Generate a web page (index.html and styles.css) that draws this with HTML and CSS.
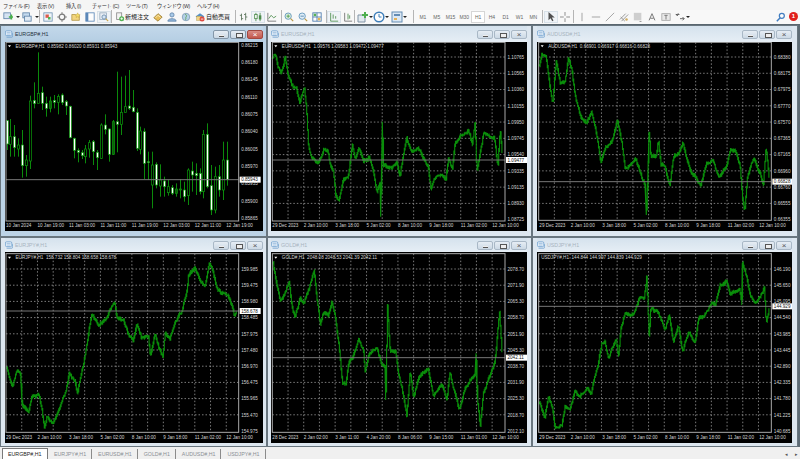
FILE: index.html
```html
<!DOCTYPE html>
<html lang="ja">
  <head>
    <meta charset="UTF-8" />
    <title>MetaTrader 4</title>
    <link rel="stylesheet" href="styles.css">
  </head>
  <body>
    <!-- icons used by the toolbar -->
    <svg class="sprites" width="0" height="0">
      <symbol id="i-new" viewBox="0 0 12 12"><rect x="1" y="1" width="8" height="7" fill="#cfe0f2" stroke="#47719c"/><path d="M7 5h2V3h2v2h1v2h-1v2H9V7H7z" fill="#2aa52a"/></symbol>
      <symbol id="i-prof" viewBox="0 0 12 12"><rect x="1" y="1" width="8" height="6" fill="#bcd6ee" stroke="#47719c"/><rect x="3" y="5" width="8" height="6" fill="#dbe8f5" stroke="#47719c"/></symbol>
      <symbol id="i-mkt" viewBox="0 0 12 12"><rect x="1" y="1" width="10" height="10" fill="#eef4fa" stroke="#5b83aa"/><rect x="3" y="3" width="4" height="4" fill="#d9402f"/><rect x="6" y="6" width="3" height="3" fill="#37a637"/></symbol>
      <symbol id="i-nav" viewBox="0 0 12 12"><circle cx="6" cy="6" r="3.4" fill="none" stroke="#666" stroke-width="1.6"/><path d="M6 0v3M6 9v3M0 6h3M9 6h3" stroke="#666"/></symbol>
      <symbol id="i-fold" viewBox="0 0 12 12"><path d="M1 3h4l1 1h4v6H1z" fill="#f1cf6a" stroke="#a98a2c"/><path d="M8 1l1 2 2 .3-1.5 1.4.4 2-1.900-1-1.900 1 .4-2L5 3.300 7 3z" fill="#f6d94c" stroke="#b08a1d" stroke-width=".5"/></symbol>
      <symbol id="i-win" viewBox="0 0 12 12"><rect x="1" y="1" width="10" height="10" fill="#fff" stroke="#3f74ad"/><rect x="1" y="1" width="3" height="10" fill="#3f74ad"/></symbol>
      <symbol id="i-test" viewBox="0 0 12 12"><rect x="1" y="1" width="8" height="8" fill="#e6edf4" stroke="#8aa0b6"/><circle cx="6" cy="6" r="2.500" fill="#cfe3f6" stroke="#51769b"/><path d="M8 8l3 3" stroke="#c49a2f" stroke-width="1.500"/></symbol>
      <symbol id="i-order" viewBox="0 0 12 12"><rect x="2" y="1" width="6" height="8" fill="#f3f3f3" stroke="#777"/><circle cx="8" cy="8" r="3" fill="#38a838"/><path d="M6.500 8h3M8 6.500v3" stroke="#fff"/></symbol>
      <symbol id="i-book" viewBox="0 0 12 12"><path d="M1 7l5-5 5 4-5 5z" fill="#e3b23c" stroke="#8c6a18"/><path d="M3 7l3-3 3 2.500" fill="none" stroke="#fff2c0"/></symbol>
      <symbol id="i-user" viewBox="0 0 12 12"><circle cx="6" cy="3.500" r="2.500" fill="#9cc2e6" stroke="#48729d"/><path d="M1 11c0-4 10-4 10 0z" fill="#7fabd6" stroke="#48729d"/></symbol>
      <symbol id="i-globe" viewBox="0 0 12 12"><circle cx="6" cy="6" r="4.500" fill="#a9cbe6" stroke="#6f8ea9"/><path d="M5 3c2 0 2 2 1 3s1 3-1 3" fill="none" stroke="#4f9b4f" stroke-width="1.200"/></symbol>
      <symbol id="i-auto" viewBox="0 0 12 12"><path d="M1 5l5-3.500L11 5v1H1z" fill="#3d7fbe"/><rect x="2" y="5" width="6" height="5" fill="#f0d070" stroke="#9a7a20" stroke-width=".5"/><circle cx="8.500" cy="8.500" r="3" fill="#d92c20"/><path d="M7 8.500h3" stroke="#fff"/></symbol>
      <symbol id="i-bars" viewBox="0 0 12 12"><path d="M3 2v8M3 4H1M3 8h2M8 1v9M8 3H6M8 6h2" stroke="#3c5a3c" fill="none"/></symbol>
      <symbol id="i-candle" viewBox="0 0 12 12"><path d="M3.500 1v10M8.500 1v10" stroke="#2d7a2d"/><rect x="2" y="3" width="3" height="5" fill="#fff" stroke="#2d7a2d"/><rect x="7" y="4" width="3" height="5" fill="#2d7a2d"/></symbol>
      <symbol id="i-line" viewBox="0 0 12 12"><path d="M1 1v10h10" stroke="#555" fill="none"/><path d="M2 8l3-4 3 3 3-2" stroke="#2d7a2d" fill="none"/></symbol>
      <symbol id="i-zin" viewBox="0 0 12 12"><circle cx="5" cy="5" r="3.800" fill="#d9ecd9" stroke="#3f7fae"/><path d="M3 5h4M5 3v4" stroke="#2a8a2a"/><path d="M8 8l3 3" stroke="#b08a2a" stroke-width="1.500"/></symbol>
      <symbol id="i-zout" viewBox="0 0 12 12"><circle cx="5" cy="5" r="3.800" fill="#dcecf7" stroke="#3f7fae"/><path d="M3 5h4" stroke="#2a6a9a"/><path d="M8 8l3 3" stroke="#b08a2a" stroke-width="1.500"/></symbol>
      <symbol id="i-tile" viewBox="0 0 12 12"><rect x="1" y="1" width="10" height="10" fill="#fff" stroke="#2a62a0"/><path d="M1 6h10M6 1v10" stroke="#2a62a0"/><rect x="2" y="2" width="3" height="3" fill="#3aa53a"/><rect x="7" y="7" width="3" height="3" fill="#e0a83a"/></symbol>
      <symbol id="i-shift" viewBox="0 0 12 12"><path d="M2 1v10h9M5 3v5M8 5v3" stroke="#2d7a2d" fill="none"/></symbol>
      <symbol id="i-auto2" viewBox="0 0 12 12"><path d="M2 1v10h9" stroke="#555" fill="none"/><path d="M6 2v7M8 4v4" stroke="#2d7a2d"/></symbol>
      <symbol id="i-ind" viewBox="0 0 12 12"><path d="M1 4h6l1 1v6H1z" fill="#dfe8ef" stroke="#6d8398"/><path d="M7 1h2v2h2v2H9v2H7V5H5V3h2z" fill="#32a332"/></symbol>
      <symbol id="i-clock" viewBox="0 0 12 12"><circle cx="6" cy="6" r="4.800" fill="#fff" stroke="#1f6ab0" stroke-width="1.500"/><path d="M6 3v3h2.500" stroke="#1f6ab0" fill="none"/></symbol>
      <symbol id="i-tpl" viewBox="0 0 12 12"><rect x="1" y="1" width="10" height="10" fill="#d7e6f4" stroke="#4b7aa8"/><rect x="3" y="3" width="6" height="2" fill="#4b7aa8"/><rect x="3" y="7" width="3" height="2" fill="#e4a53a"/></symbol>
      <symbol id="i-cursor" viewBox="0 0 12 12"><path d="M3 0v10l2.500-2.500L7.500 11l1.500-.8-2-3.500h3.500z" fill="#333"/></symbol>
      <symbol id="i-cross" viewBox="0 0 12 12"><path d="M6 0v4.500M6 7.500V12M0 6h4.500M7.500 6H12" stroke="#666"/></symbol>
      <symbol id="i-vline" viewBox="0 0 12 12"><path d="M6 1v10" stroke="#888"/></symbol>
      <symbol id="i-hline" viewBox="0 0 12 12"><path d="M1 6h10" stroke="#888"/></symbol>
      <symbol id="i-trend" viewBox="0 0 12 12"><path d="M1 11L11 1" stroke="#888"/></symbol>
      <symbol id="i-chan" viewBox="0 0 12 12"><path d="M1 9l7-7M3 11l8-8M2 6l5 5" stroke="#777" fill="none"/><circle cx="9" cy="9" r="1.500" fill="#c9a04a"/></symbol>
      <symbol id="i-fib" viewBox="0 0 12 12"><rect x="1" y="1" width="9" height="9" fill="#c9c9c9"/><path d="M7 11h4l-2 1z" fill="#555"/></symbol>
      <symbol id="i-text" viewBox="0 0 12 12"><path d="M2.500 10L6 2l3.500 8M4 7.500h4" stroke="#666" stroke-width="1.200" fill="none"/></symbol>
      <symbol id="i-label" viewBox="0 0 12 12"><rect x="1" y="2" width="10" height="8" fill="#e6e6e6" stroke="#999"/><path d="M4 4h4M6 4v5" stroke="#555"/></symbol>
      <symbol id="i-arrows" viewBox="0 0 12 12"><path d="M1 3h4l-1.500-1.500M1 3l2.500 1.500M6 8h5M9 6l2 2-2 2" stroke="#333" fill="none"/></symbol>
      <symbol id="i-find" viewBox="0 0 12 12"><circle cx="7" cy="4.500" r="3" fill="#fff" stroke="#2369b8" stroke-width="1.500"/><path d="M5 7l-4 4" stroke="#2369b8" stroke-width="1.800"/></symbol>
      <symbol id="i-winbar" viewBox="0 0 10 10"><rect x=".5" y="1" width="8" height="6" rx="1.500" fill="#eaf3fb" stroke="#6f9fce"/><path d="M2 9h6.500c1 0 1-1 1-2V4" fill="none" stroke="#6f9fce"/><path d="M2 3h5M2 5h5" stroke="#6f9fce" stroke-width=".7"/></symbol>
    </svg>

    <nav class="menu">
      <span>ファイル (F)</span>
      <span>表示 (V)</span>
      <span>挿入 (I)</span>
      <span>チャート (C)</span>
      <span>ツール (T)</span>
      <span>ウィンドウ (W)</span>
      <span>ヘルプ (H)</span>
    </nav>

    <div class="toolbar">
      <div class="tool-group g-file">
        <svg class="tool"><use href="#i-new" /></svg><i class="drop"></i>
        <svg class="tool"><use href="#i-prof" /></svg><i class="drop"></i>
      </div>
      <div class="tool-group g-view">
        <svg class="tool"><use href="#i-mkt" /></svg>
        <svg class="tool"><use href="#i-nav" /></svg>
        <svg class="tool"><use href="#i-fold" /></svg>
        <svg class="tool"><use href="#i-win" /></svg>
        <svg class="tool pressed"><use href="#i-test" /></svg>
      </div>
      <div class="tool-group g-trade">
        <svg class="tool"><use href="#i-order" /></svg>
        <span class="tool-label order">新規注文</span>
        <svg class="tool"><use href="#i-book" /></svg>
        <svg class="tool"><use href="#i-user" /></svg>
        <svg class="tool"><use href="#i-globe" /></svg>
        <svg class="tool"><use href="#i-auto" /></svg>
        <span class="tool-label">自動売買</span>
      </div>
      <div class="tool-group g-type">
        <svg class="tool"><use href="#i-bars" /></svg>
        <svg class="tool pressed"><use href="#i-candle" /></svg>
        <svg class="tool"><use href="#i-line" /></svg>
      </div>
      <div class="tool-group g-zoom">
        <svg class="tool"><use href="#i-zin" /></svg>
        <svg class="tool"><use href="#i-zout" /></svg>
        <svg class="tool"><use href="#i-tile" /></svg>
      </div>
      <div class="tool-group g-shift">
        <svg class="tool pressed"><use href="#i-shift" /></svg>
        <svg class="tool"><use href="#i-auto2" /></svg>
      </div>
      <div class="tool-group g-ind">
        <svg class="tool"><use href="#i-ind" /></svg><i class="drop"></i>
        <svg class="tool"><use href="#i-clock" /></svg><i class="drop"></i>
        <svg class="tool"><use href="#i-tpl" /></svg><i class="drop"></i>
      </div>
      <div class="tool-group periods">
        <span>M1</span><span>M5</span><span>M15</span><span>M30</span>
        <span class="on">H1</span><span>H4</span><span>D1</span><span>W1</span><span>MN</span>
      </div>
      <div class="tool-group g-cursor">
        <svg class="tool pressed"><use href="#i-cursor" /></svg>
        <svg class="tool"><use href="#i-cross" /></svg>
      </div>
      <div class="tool-group g-draw">
        <svg class="tool"><use href="#i-vline" /></svg>
        <svg class="tool"><use href="#i-hline" /></svg>
        <svg class="tool"><use href="#i-trend" /></svg>
        <svg class="tool"><use href="#i-chan" /></svg>
        <svg class="tool"><use href="#i-fib" /></svg>
        <svg class="tool"><use href="#i-text" /></svg>
        <svg class="tool"><use href="#i-label" /></svg>
        <svg class="tool"><use href="#i-arrows" /></svg><i class="drop"></i>
      </div>
      <div class="toolbar-end">
        <svg class="tool"><use href="#i-find" /></svg>
        <span class="alert">1</span>
      </div>
    </div>

    <main class="workspace">
      <section class="window col-1 active">
        <header class="title"><svg class="win-icon"><use href="#i-winbar" /></svg><span>EURGBP#,H1</span><div class="win-btns"><b class="min"></b><b class="max"></b><b class="close">×</b></div></header>
        <svg class="chart" id="eurgbp"></svg>
      </section>
      <section class="window col-2">
        <header class="title"><svg class="win-icon"><use href="#i-winbar" /></svg><span>EURUSD#,H1</span><div class="win-btns"><b class="min"></b><b class="max"></b><b class="close">×</b></div></header>
        <svg class="chart" id="eurusd"></svg>
      </section>
      <section class="window col-3">
        <header class="title"><svg class="win-icon"><use href="#i-winbar" /></svg><span>AUDUSD#,H1</span><div class="win-btns"><b class="min"></b><b class="max"></b><b class="close">×</b></div></header>
        <svg class="chart" id="audusd"></svg>
      </section>
      <section class="window col-1 low">
        <header class="title"><svg class="win-icon"><use href="#i-winbar" /></svg><span>EURJPY#,H1</span><div class="win-btns"><b class="min"></b><b class="max"></b><b class="close">×</b></div></header>
        <svg class="chart" id="eurjpy"></svg>
      </section>
      <section class="window col-2 low">
        <header class="title"><svg class="win-icon"><use href="#i-winbar" /></svg><span>GOLD#,H1</span><div class="win-btns"><b class="min"></b><b class="max"></b><b class="close">×</b></div></header>
        <svg class="chart" id="gold"></svg>
      </section>
      <section class="window col-3 low">
        <header class="title"><svg class="win-icon"><use href="#i-winbar" /></svg><span>USDJPY#,H1</span><div class="win-btns"><b class="min"></b><b class="max"></b><b class="close">×</b></div></header>
        <svg class="chart" id="usdjpy"></svg>
      </section>
    </main>

    <footer class="tabs">
      <span class="tab on">EURGBP#,H1</span>
      <span class="tab">EURJPY#,H1</span>
      <span class="tab">EURUSD#,H1</span>
      <span class="tab">GOLD#,H1</span>
      <span class="tab">AUDUSD#,H1</span>
      <span class="tab">USDJPY#,H1</span>
      <span class="tab-arrows"><i>◂</i><i>▸</i></span>
    </footer>

    <script src="charts.js"></script>
  </body>
</html>
```

FILE: styles.css
```css
* {
  margin: 0;
  padding: 0;
  box-sizing: border-box;
}

body {
  width: 800px;
  height: 459px;
  overflow: hidden;
  background-color: #f0f0f0;
  font-family: "Liberation Sans", "Noto Sans CJK JP", sans-serif;
  font-size: 6px;
  color: #333;
}

.sprites {
  position: absolute;
}

/* menu */
.menu {
  height: 10px;
  display: grid;
  grid-template-columns: 34px 29px 26px 34px 31px 40px auto;
  align-items: center;
  padding-left: 3px;
  background-color: #f5f5f5;
  font-size: 5.2px;
  letter-spacing: -0.3px;
  white-space: nowrap;
}

/* toolbar */
.toolbar {
  height: 15px;
  display: flex;
  align-items: center;
  background-color: #f8f8f8;
  border-bottom: 1px solid #59666f;
  padding-bottom: 1px;
}

.tool-group {
  flex: none;
  display: flex;
  align-items: center;
  height: 13px;
  padding-left: 1px;
  border-right: 1px solid #b5b5b5;
}

.g-file { width: 40px; }
.g-view { width: 72px; }
.g-trade { width: 124px; }
.g-type { width: 46px; }
.g-zoom { width: 45px; padding-left: 0; }
.g-shift { width: 28px; padding-left: 0; }
.g-ind { width: 59px; padding-left: 2px; }
.g-cursor { width: 32px; border-left: 1px solid #b5b5b5; margin-left: 1px; }
.g-draw { width: 118px; border-right: 0; }

.tool {
  flex: none;
  width: 14px;
  height: 12px;
  padding: 1px;
  opacity: 0.85;
}

.tool.pressed {
  background-color: #eef3f7;
  outline: 1px solid #d3dde6;
  outline-offset: -1px;
}

.drop {
  flex: none;
  width: 0;
  height: 0;
  margin: 0 1px;
  border-left: 2px solid transparent;
  border-right: 2px solid transparent;
  border-top: 2px solid #222;
}

.g-file .tool:last-of-type {
  margin-left: -1px;
}

.g-ind .tool {
  width: 12px;
  padding: 0;
}

.g-ind .drop {
  margin: 0;
}

.g-ind .tool:last-of-type {
  margin-left: 2px;
}

.g-draw .drop {
  margin-left: -1px;
}

.tool-label {
  flex: none;
  font-size: 6px;
  color: #222;
  white-space: nowrap;
  margin-left: -1px;
}

.tool-label.order {
  margin-left: -2px;
  margin-right: 2px;
}

.periods {
  width: 127px;
  padding-left: 2px;
  border-right: 0;
}

.periods span {
  width: 13.8px;
  text-align: center;
  font-size: 5px;
  color: #666;
}

.periods .on {
  background-color: #fff;
  outline: 1px solid #d6d6d6;
  outline-offset: -1px;
  line-height: 12px;
}

.toolbar-end {
  margin-left: auto;
  display: flex;
  align-items: center;
  padding-right: 2px;
}

.alert {
  width: 9px;
  height: 9px;
  margin-left: 1px;
  border-radius: 50%;
  background-color: #e0201c;
  color: #fff;
  font-size: 6px;
  font-weight: bold;
  line-height: 9px;
  text-align: center;
}

/* child windows */
.workspace {
  height: 422px;
  display: grid;
  grid-template-columns: 267px 265px 266px;
  grid-template-rows: 212px 210px;
  padding-right: 2px;
  background-color: #5e6c76;
}

.window {
  display: flex;
  flex-direction: column;
  min-width: 0;
  min-height: 0;
  border: 1px solid #69767f;
  padding-bottom: 5px;
  background-color: #dde7f0;
}

.window.low {
  padding-bottom: 3px;
}

.window.active {
  background-color: #bcd3e6;
}

.col-1 { padding-left: 4px; padding-right: 3px; }
.col-2 { padding-left: 3px; padding-right: 4px; }
.col-3 { padding-left: 4px; padding-right: 5px; }

.title {
  flex: none;
  height: 16px;
  display: flex;
  align-items: center;
  gap: 2px;
  font-size: 5.3px;
  color: #a8b4bf;
  background-image: linear-gradient(#d5e2ed, #e6eef5);
}

.low .title {
  height: 14px;
}

.active .title {
  color: #26333f;
  background-image: linear-gradient(#c3d8ea, #b5cee3);
}

.win-icon {
  flex: none;
  width: 8px;
  height: 8px;
}

.win-btns {
  margin-left: auto;
  display: flex;
  gap: 1px;
}

.win-btns b {
  position: relative;
  width: 16px;
  height: 9px;
  border: 1px solid #a9b8c6;
  border-radius: 2px;
  background-image: linear-gradient(#e6edf4, #ccd9e5);
  color: #555;
  font-size: 8px;
  font-weight: normal;
  line-height: 7px;
  text-align: center;
}

.active .win-btns b {
  border-color: #8497a9;
}

.active .win-btns .close {
  background-image: linear-gradient(#d98c84, #c2574c);
  border-color: #a3483f;
  color: #fff;
}

.win-btns .min::after,
.win-btns .max::after {
  content: "";
  position: absolute;
  left: 5px;
  top: 2px;
  width: 5px;
  height: 3px;
  border: 1px solid #555;
  background-color: #eee;
}

.win-btns .min::after {
  top: 4px;
  height: 1px;
  border-width: 0 0 1px;
}

.chart {
  display: block;
  flex: 1;
  width: 100%;
  min-height: 0;
  background-color: #000;
}

.chart text {
  font-family: "Liberation Sans", sans-serif;
  font-size: 4.6px;
  fill: #d6d6d6;
  white-space: pre;
}

.chart .price-tag {
  fill: #111;
}

/* tabs */
.tabs {
  height: 12px;
  display: flex;
  align-items: flex-end;
  padding-left: 2px;
  background-color: #f0f0f0;
  font-size: 5.3px;
}

.tab {
  height: 10px;
  line-height: 10px;
  padding: 0 5px 0 6px;
  border-right: 1px solid #8b8b8b;
  color: #8a8f94;
  white-space: nowrap;
}

.tab.on {
  width: 46px;
  height: 11px;
  padding: 0 5px;
  background-color: #fff;
  border: 1px solid #7a7a7a;
  border-bottom: 0;
  color: #222;
}

.tab-arrows {
  margin-left: auto;
  display: flex;
  gap: 7px;
  padding: 0 2px 2px 0;
  font-size: 5px;
  color: #555;
}

.tab-arrows i {
  font-style: normal;
}
```

FILE: charts.js
```js
// all points below are read off the screenshot at 3x, relative to a crop corner
const NS = "http://www.w3.org/2000/svg";
const stdDates = ["29 Dec 2023", "2 Jan 10:00", "3 Jan 18:00", "5 Jan 02:00", "8 Jan 10:00", "9 Jan 18:00", "11 Jan 02:00", "12 Jan 10:00"];

const charts = {
  eurgbp: {
    ox: -5, box: [18, 52, 716, 588], firstY: 60, stepY: 51.9, dateX: 18, dateY: 601, tick: 94.4,
    head: "EURGBP#,H1  0.85982 0.86020 0.85931 0.85943", now: ["0.85943", 464],
    prices: ["0.86215", "0.86180", "0.86145", "0.86110", "0.86075", "0.86040", "0.86005", "0.85970", "0.85935", "0.85900", "0.85865"],
    dates: ["10 Jan 2024", "10 Jan 19:00", "11 Jan 03:00", "11 Jan 11:00", "11 Jan 19:00", "12 Jan 03:00", "12 Jan 11:00", "12 Jan 19:00"],
    // x, high, low, body top, body bottom, fill (w white, k hollow, g green)
    candles: [
      [20,285,375,287,357,"w"],[31,282,395,335,358,"k"],[43,300,395,335,368,"w"],[55,340,395,360,372,"k"],
      [67,315,458,360,422,"w"],[79,390,455,405,422,"k"],[91,212,432,228,408,"k"],[103,172,250,226,236,"w"],
      [115,82,235,205,235,"k"],[126,185,255,203,235,"w"],[138,215,275,235,250,"w"],[149,215,262,228,250,"g"],
      [161,210,250,226,232,"w"],[173,208,268,214,232,"k"],[185,205,240,210,233,"w"],[197,225,270,230,243,"w"],
      [209,242,340,244,338,"w"],[221,338,400,340,376,"w"],[233,370,412,376,382,"w"],[245,375,402,383,392,"w"],
      [256,360,415,372,395,"k"],[268,345,398,353,372,"k"],[280,345,420,350,380,"w"],[292,375,435,382,398,"w"],
      [304,295,402,300,400,"k"],[316,268,328,300,313,"w"],[328,310,410,312,388,"w"],[340,285,390,290,388,"g"],
      [352,140,382,290,298,"w"],[364,155,330,262,298,"k"],[375,152,262,245,262,"k"],[386,135,255,243,250,"w"],
      [398,195,262,247,260,"w"],[410,250,378,262,370,"w"],[421,305,388,318,373,"k"],[433,310,462,320,415,"w"],
      [445,380,465,410,413,"w"],[457,380,550,420,480,"k"],[469,412,490,418,480,"w"],[481,418,515,465,483,"k"],
      [493,455,515,468,485,"w"],[505,465,512,485,503,"k"],[517,480,510,488,505,"w"],[528,475,515,492,505,"g"],
      [540,462,520,492,495,"g"],[552,470,530,495,515,"w"],[563,430,540,435,512,"k"],[575,410,500,438,450,"w"],
      [587,415,510,445,452,"w"],[599,430,508,445,500,"w"],[610,315,520,328,500,"k"],[622,295,490,328,485,"w"],
      [634,420,570,482,555,"w"],[646,425,565,455,555,"k"],[658,420,515,455,495,"w"],[670,350,525,405,495,"k"],
      [682,350,482,405,464,"w"]
    ]
  },
  eurusd: {
    ox: -6, box: [22, 52, 720, 588], firstY: 96, stepY: 48.8, dateX: 22, dateY: 602, tick: 94.2, grid: true,
    head: "EURUSD#,H1  1.09576 1.09583 1.09472 1.09477", now: ["1.09477", 405],
    prices: ["1.10765", "1.10565", "1.10360", "1.10155", "1.09950", "1.09745", "1.09540", "1.09335", "1.09135", "1.08930", "1.08725"],
    dates: stdDates,
    line: [22,100,30,85,38,125,48,145,55,125,60,95,68,150,75,165,85,185,95,190,103,235,118,195,124,250,130,360,140,400,160,420,178,375,188,375,195,420,205,440,212,510,222,525,235,465,250,450,262,355,270,400,282,370,295,410,312,395,325,440,335,505,345,470,347,575,349,470,352,290,355,420,380,430,395,410,405,455,415,390,425,335,440,385,460,370,475,405,490,430,497,490,510,455,530,445,542,465,550,400,562,430,570,360,590,335,610,320,622,360,630,290,635,440,650,360,655,325,675,335,688,340,698,430,705,315,712,400]
  },
  audusd: {
    ox: -7, box: [26, 52, 724, 586], firstY: 96, stepY: 48.8, dateX: 28, dateY: 602, tick: 94.2, grid: true,
    head: "AUDUSD#,H1  0.66901 0.66917 0.66816 0.66828", now: ["0.66828", 470],
    prices: ["0.68380", "0.68175", "0.67975", "0.67770", "0.67570", "0.67365", "0.67165", "0.66960", "0.66760", "0.66555", "0.66355"],
    dates: stdDates,
    line: [28,120,35,85,48,85,58,170,68,230,78,105,90,170,105,170,115,100,125,130,135,210,150,270,170,300,185,265,200,330,212,415,225,370,245,350,262,290,275,350,285,430,305,415,315,395,330,440,345,480,349,570,353,470,357,320,362,400,378,400,385,350,392,420,405,430,420,480,430,395,445,385,458,350,470,400,485,440,500,460,512,485,530,420,550,405,565,455,590,430,600,375,615,375,630,420,638,520,644,555,652,460,670,400,690,440,700,480,708,365,718,470]
  },
  eurjpy: {
    ox: -5, box: [18, 56, 716, 592], firstY: 102, stepY: 48.6, dateX: 18, dateY: 606, tick: 94.4, grid: true,
    head: "EURJPY#,H1  158.732 158.804 158.658 158.678", now: ["158.678", 228],
    prices: ["159.985", "159.475", "158.980", "158.485", "157.975", "157.480", "156.970", "156.475", "155.965", "155.470", "154.975"],
    dates: stdDates,
    line: [20,400,30,440,38,455,50,410,62,425,66,510,85,535,95,480,115,480,125,520,133,575,140,545,158,560,180,520,195,480,208,420,225,440,232,475,250,390,258,340,265,300,275,240,295,270,320,240,343,200,350,250,370,255,385,300,400,320,410,265,425,310,445,305,450,360,465,300,478,345,488,370,495,300,510,315,525,260,545,230,560,170,565,125,585,100,600,140,615,150,628,85,640,120,650,160,665,170,680,175,695,205,703,240,710,220]
  },
  gold: {
    ox: -6, box: [22, 56, 720, 592], firstY: 102, stepY: 48.6, dateX: 22, dateY: 606, tick: 94.2, grid: true,
    head: "GOLD#,H1  2048.08 2048.53 2041.39 2042.11", now: ["2042.11", 368],
    prices: ["2078.70", "2071.90", "2065.30", "2058.70", "2051.90", "2045.30", "2038.70", "2031.90", "2025.30", "2018.70", "2012.10"],
    dates: ["28 Dec 2023", "2 Jan 02:00", "3 Jan 11:00", "4 Jan 20:00", "8 Jan 06:00", "9 Jan 15:00", "11 Jan 01:00", "12 Jan 10:00"],
    line: [24,85,35,150,45,200,58,175,72,140,80,210,90,245,105,190,115,210,130,170,147,100,155,180,165,265,175,230,190,240,200,200,210,240,222,330,232,440,242,445,250,380,265,360,280,310,295,350,300,410,310,360,335,340,350,390,360,395,362,495,367,210,375,350,392,350,400,420,412,470,425,550,435,410,445,480,460,430,490,400,505,480,530,450,545,490,555,410,570,480,582,525,600,455,615,430,630,420,633,355,637,490,645,575,655,470,670,430,690,380,703,225,712,370]
  },
  usdjpy: {
    ox: -7, box: [26, 56, 724, 592], firstY: 102, stepY: 48.6, dateX: 28, dateY: 606, tick: 94.2, grid: true,
    head: "USDJPY#,H1  144.844 144.997 144.839 144.929", now: ["144.929", 214], noMark: true,
    prices: ["146.190", "145.650", "145.095", "144.540", "143.985", "143.445", "142.890", "142.335", "141.780", "141.225", "140.685"],
    dates: stdDates,
    line: [28,505,45,545,55,480,68,520,75,575,95,570,105,510,120,530,135,460,150,485,170,460,183,480,195,420,205,385,215,325,225,325,235,375,245,340,258,310,265,365,272,280,285,230,310,235,330,180,342,190,350,125,357,310,362,225,380,230,395,260,405,285,418,240,430,320,445,270,458,345,475,290,495,320,505,250,525,240,545,200,555,210,570,150,590,140,600,180,628,165,635,210,637,85,650,130,660,185,675,215,690,190,703,160,708,265,718,215]
  }
};

// small repeatable noise so every run draws the same jitter
let seed = 48271;
function noise() {
  seed = (seed * 16807) % 2147483647;
  return seed / 2147483647 - 0.5;
}

function add(svg, tag, attrs, text) {
  const el = document.createElementNS(NS, tag);
  for (const k in attrs) el.setAttribute(k, attrs[k]);
  if (text) el.textContent = text;
  svg.appendChild(el);
  return el;
}

function drawGrid(svg, c, X, Y) {
  const [l, t, r, b] = c.box;
  for (let i = 0; i < 11; i++) {
    const y = Y(c.firstY + i * c.stepY);
    if (y > Y(b) - 2) continue;
    add(svg, "line", { x1: X(l), x2: X(r), y1: y, y2: y, stroke: "#9a9a9a", "stroke-width": 0.8, "stroke-dasharray": "1.5 2" });
  }
  for (let x = l + c.tick / 2; x < r; x += c.tick / 2) {
    add(svg, "line", { x1: X(x), x2: X(x), y1: Y(t), y2: Y(b), stroke: "#9a9a9a", "stroke-width": 0.8, "stroke-dasharray": "1.5 2" });
  }
}

// one hi-lo bar per step around the key points, joined to the step before it
function drawLine(svg, c, X, Y) {
  let d = "";
  let wob = 0;
  let last = X(c.line[0]);
  let prev = Y(c.line[1]);
  for (let i = 0; i < c.line.length - 2; i += 2) {
    const x0 = X(c.line[i]), y0 = Y(c.line[i + 1]);
    const x1 = X(c.line[i + 2]), y1 = Y(c.line[i + 3]);
    // narrow key pairs are spikes, draw them straight
    if (x1 - x0 < 1.5) {
      d += "M" + x0.toFixed(1) + " " + y0.toFixed(1) + "L" + x1.toFixed(1) + " " + y1.toFixed(1);
    }
    for (let x = last; x < x1; x += 0.8) {
      const f = (x - x0) / (x1 - x0);
      wob = wob * 0.82 + noise() * 2.2;
      const y = y0 + (y1 - y0) * f + wob;
      const h = 0.6 + Math.abs(noise()) * 3;
      d += "M" + x.toFixed(1) + " " + (Math.min(y, prev) - h).toFixed(1) + "V" + (Math.max(y, prev) + h).toFixed(1);
      prev = y;
      last = x + 0.8;
    }
  }
  add(svg, "path", { d: d, fill: "none", stroke: "#0a8e0a", "stroke-width": 1.1 });
}

function drawCandles(svg, c, X, Y) {
  c.candles.forEach(function (k) {
    const x = Math.round(X(k[0])) + 0.5;
    add(svg, "line", { x1: x, x2: x, y1: Y(k[1]), y2: Y(k[2]), stroke: "#0b8a0b" });
    const fill = { w: "#fff", k: "#000", g: "#0b5f0b" }[k[5]];
    add(svg, "rect", { x: x - 1, y: Y(k[3]), width: 2, height: Math.max(1, (k[4] - k[3]) / 3), fill: fill, stroke: "#0b9a0b", "stroke-width": 0.7 });
  });
}

function drawChart(id, c) {
  const svg = document.getElementById(id);
  const X = (v) => v / 3 + c.ox;
  const Y = (v) => v / 3 - 17;
  const [l, t, r, b] = c.box;

  if (c.grid) drawGrid(svg, c, X, Y);
  if (c.line) drawLine(svg, c, X, Y);
  if (c.candles) drawCandles(svg, c, X, Y);

  // current price line
  add(svg, "line", { x1: X(l), x2: X(r), y1: Y(c.now[1]), y2: Y(c.now[1]), stroke: "#777" });
  // chart frame
  add(svg, "rect", { x: X(l), y: Y(t), width: (r - l) / 3, height: (b - t) / 3, fill: "none", stroke: "#a8a8a8" });

  c.prices.forEach(function (p, i) {
    const y = c.firstY + i * c.stepY;
    add(svg, "text", { x: X(r) + 2.5, y: Y(y) + 1.8 }, p);
  });
  c.dates.forEach(function (d, i) {
    add(svg, "text", { x: X(c.dateX + i * c.tick), y: Y(c.dateY) + 1.8 }, d);
  });

  add(svg, "rect", { x: X(r) + 1, y: Y(c.now[1]) - 3, width: 21, height: 6, fill: "#fff" });
  add(svg, "text", { class: "price-tag", x: X(r) + 2.5, y: Y(c.now[1]) + 1.8 }, c.now[0]);

  // header, the small triangle is missing on one chart
  if (!c.noMark) add(svg, "path", { d: "M" + (X(l) + 2) + " " + (Y(t) + 3) + "h3l-1.500 2z", fill: "#fff" });
  add(svg, "text", { x: X(l) + (c.noMark ? 2.5 : 9.5), y: Y(t) + 5.5 }, c.head);
}

for (const id in charts) drawChart(id, charts[id]);
```
